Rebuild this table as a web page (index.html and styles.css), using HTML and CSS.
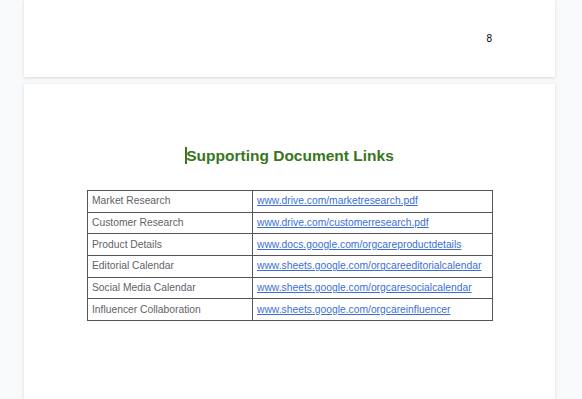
FILE: index.html
```html
<!DOCTYPE html>
<html lang="en">
<head>
  <meta charset="UTF-8">
  <meta name="viewport" content="width=device-width, initial-scale=1.0">
  <title>Supporting Document Links</title>
  <link rel="stylesheet" href="styles.css">
</head>
<body>
<div class="canvas">
  <div class="page page-end">
    <div class="page-number">8</div>
  </div>

  <div class="page page-next">
    <h1 class="doc-title"><span class="cursor"></span>Supporting Document Links</h1>
    <table class="links-table">
      <tr>
        <td class="label">Market Research</td>
        <td><a href="#">www.drive.com/marketresearch.pdf</a></td>
      </tr>
      <tr>
        <td class="label">Customer Research</td>
        <td><a href="#">www.drive.com/customerresearch.pdf</a></td>
      </tr>
      <tr>
        <td class="label">Product Details</td>
        <td><a href="#">www.docs.google.com/orgcareproductdetails</a></td>
      </tr>
      <tr>
        <td class="label">Editorial Calendar</td>
        <td><a href="#">www.sheets.google.com/orgcareeditorialcalendar</a></td>
      </tr>
      <tr>
        <td class="label">Social Media Calendar</td>
        <td><a href="#">www.sheets.google.com/orgcaresocialcalendar</a></td>
      </tr>
      <tr>
        <td class="label">Influencer Collaboration</td>
        <td><a href="#">www.sheets.google.com/orgcareinfluencer</a></td>
      </tr>
    </table>
  </div>
</div>
</body>
</html>
```

FILE: styles.css
```css
body {
  margin: 0;
  background-color: #f8f9fa;
  font-family: 'Liberation Sans', Arial, sans-serif;
  overflow: hidden;
}
.canvas {
  padding-left: 24px;
  width: 531px;
}
.page {
  background-color: white;
  box-shadow: 0 1px 3px rgba(60, 64, 67, 0.18);
}
/* bottom of the previous page */
.page-end {
  height: 77px;
}
.page-number {
  padding-top: 33px;
  padding-right: 63px;
  text-align: right;
  font-size: 10px;
  line-height: 12px;
  color: #000;
}
.page-next {
  margin-top: 7px;
  padding-top: 63px;
  height: 252px;
}
.doc-title {
  margin: 0;
  text-align: center;
  font-size: 15.5px;
  line-height: 18px;
  font-weight: bold;
  color: #38761d;
}
.cursor {
  display: inline-block;
  width: 2px;
  height: 17px;
  margin-right: -1px;
  vertical-align: -3px;
  background-color: #38761d;
}
.links-table {
  margin: 25px 0 0 63px;
  width: 406px;
  border-collapse: collapse;
  font-size: 10.3px;
  color: #5f6368;
}
.links-table td {
  border: 1px solid #555;
  height: 20.7px;
  padding: 0 4px;
  line-height: 12px;
}
.links-table td.label {
  width: 156px;
}
.links-table a {
  color: #3b6fd4;
  text-decoration: underline;
}
```
